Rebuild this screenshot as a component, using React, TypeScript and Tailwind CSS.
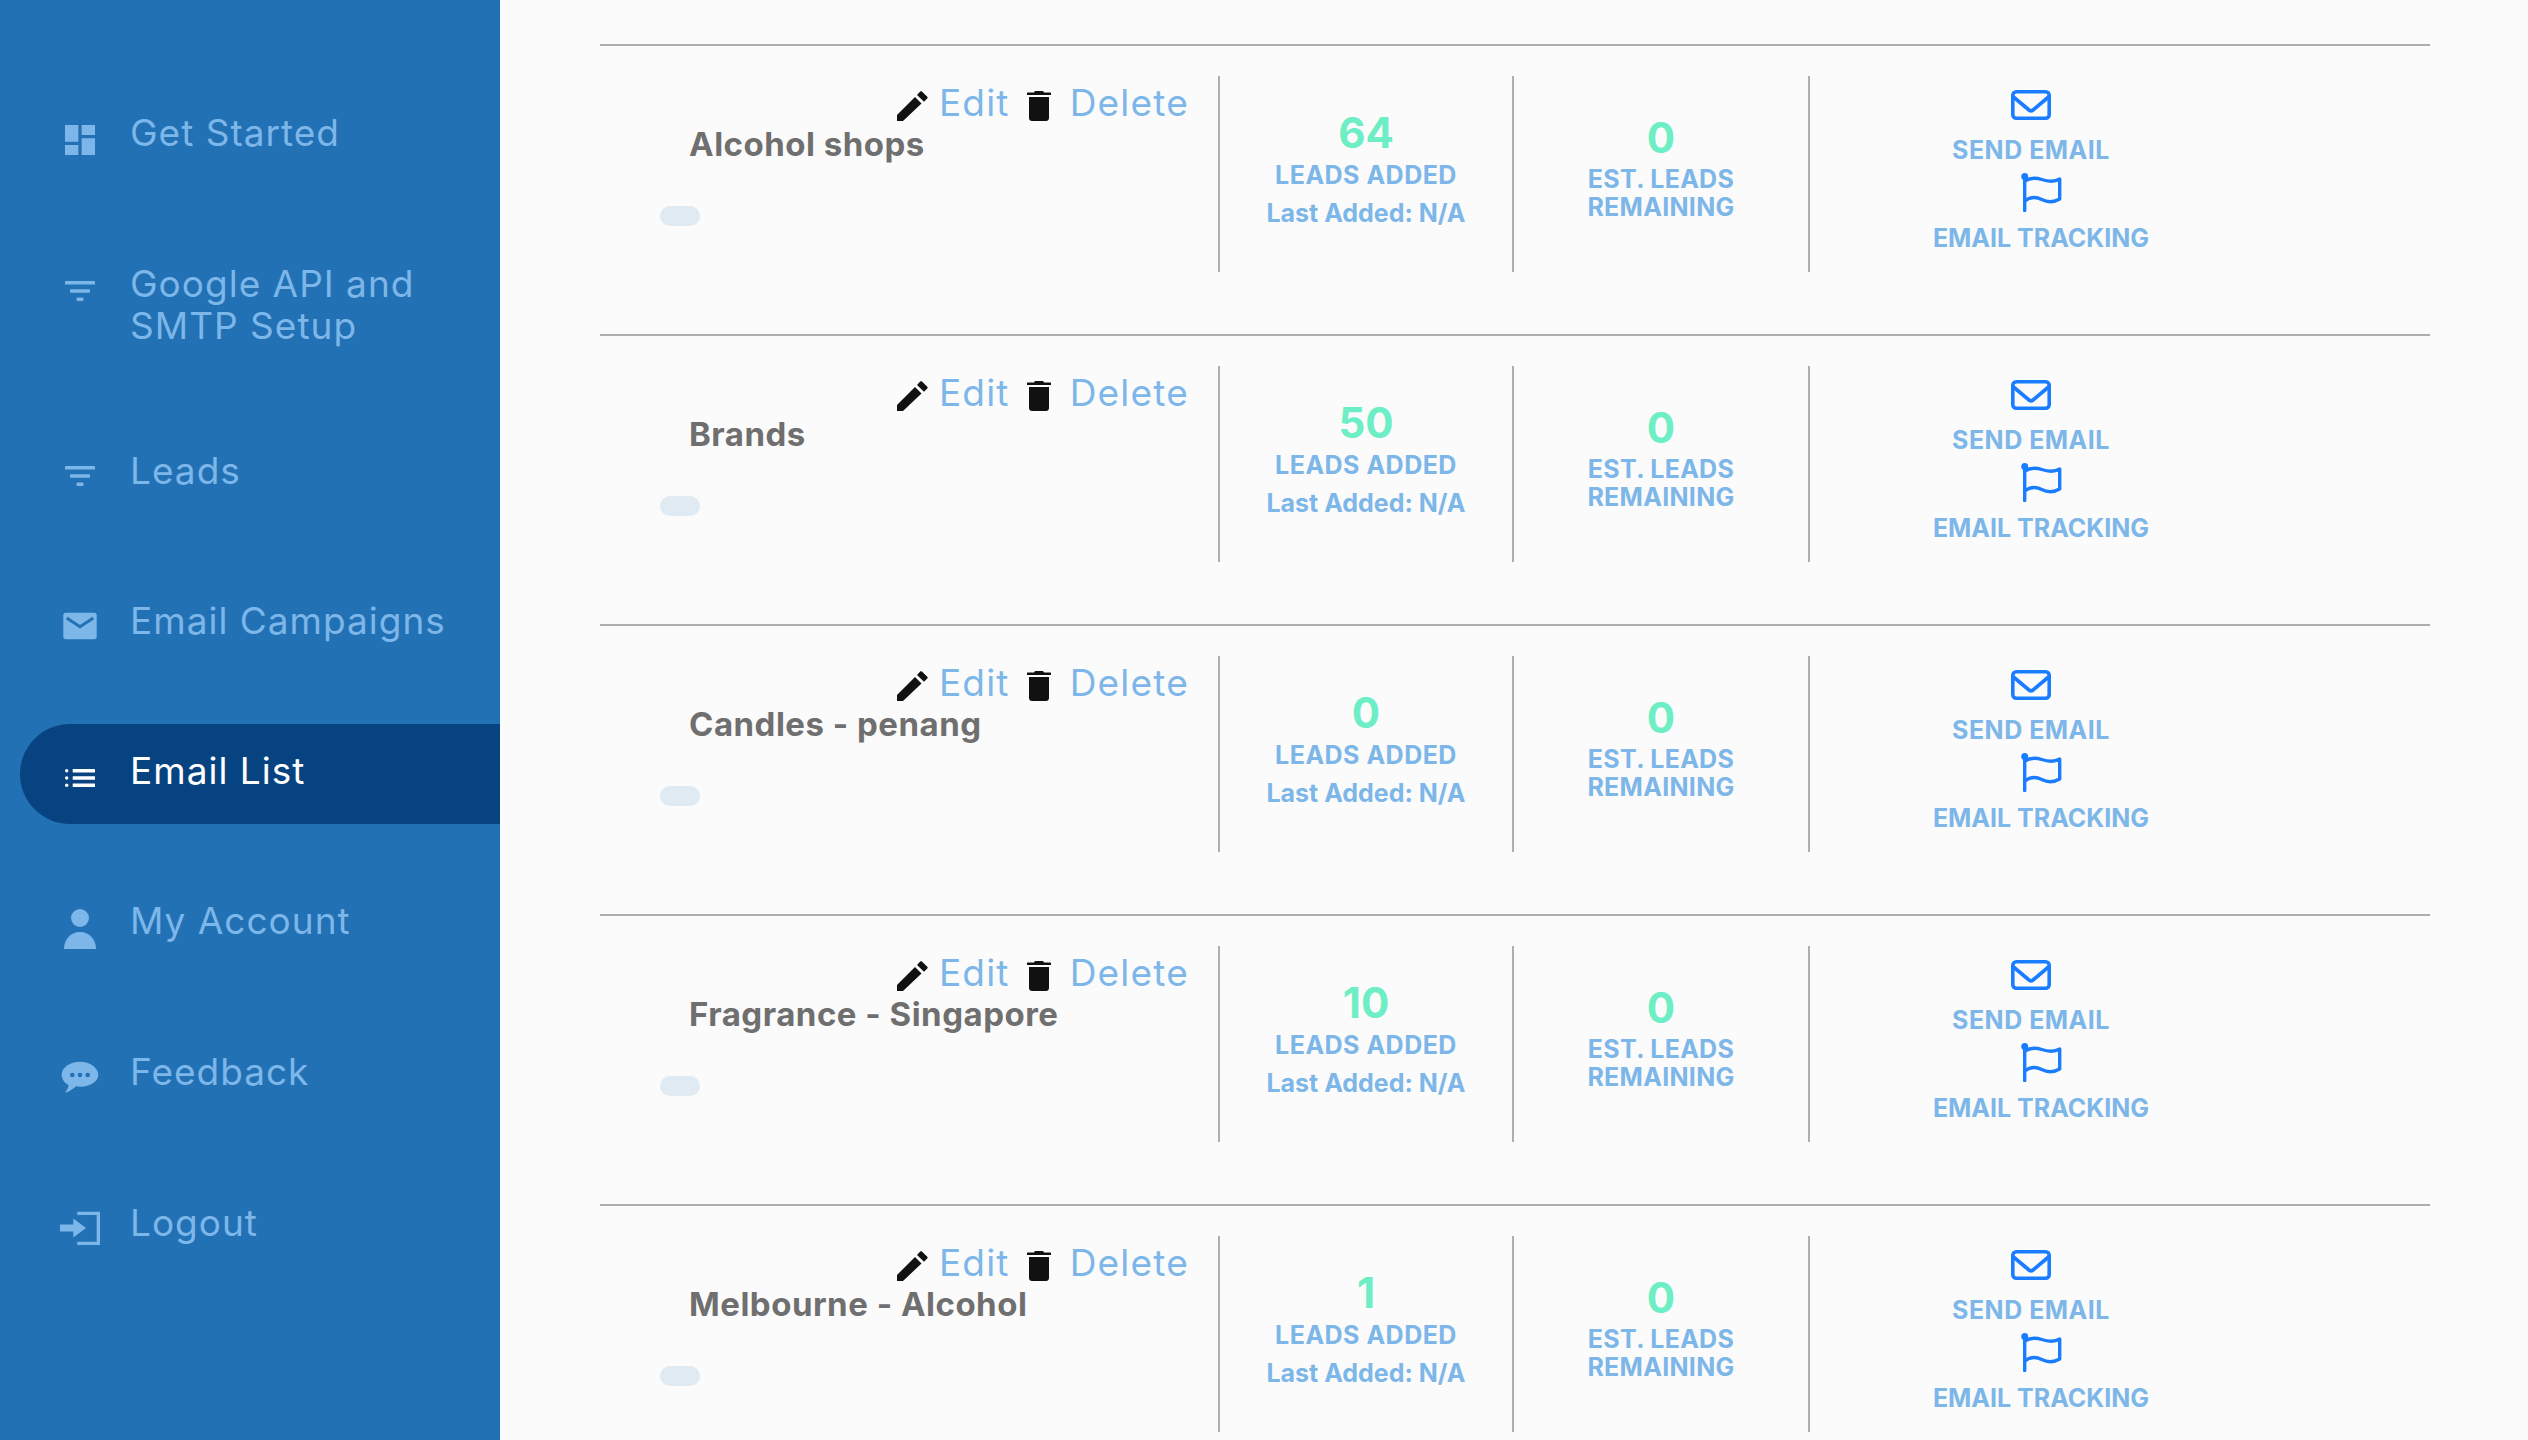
import React from "react";

const Dashboard = () => (
  <svg viewBox="0 0 24 24" className="w-10 h-10" fill="currentColor">
    <path d="M3 13h8V3H3v10zm0 8h8v-6H3v6zm10 0h8V11h-8v10zm0-18v6h8V3h-8z" />
  </svg>
);

const Filter = () => (
  <svg viewBox="0 0 40 40" className="w-10 h-10" fill="currentColor">
    <rect x="5" y="10" width="30" height="3.400" rx="0.500" />
    <rect x="10" y="18.300" width="20" height="3.400" rx="0.500" />
    <rect x="16.500" y="26.500" width="7" height="3.400" rx="1" />
  </svg>
);

const Mail = () => (
  <svg viewBox="0 0 40 40" className="w-10 h-10">
    <rect x="3.300" y="6.700" width="33.400" height="26.600" rx="2.500" fill="currentColor" />
    <path d="M6.700 12l13.300 8.700L33.300 12" fill="none" stroke="#2271b5" strokeWidth="3" />
  </svg>
);

const ListIcon = () => (
  <svg viewBox="0 0 40 40" className="w-10 h-10" fill="currentColor">
    <circle cx="6.700" cy="12.700" r="1.700" />
    <circle cx="6.700" cy="20" r="1.700" />
    <circle cx="6.700" cy="27.300" r="1.700" />
    <rect x="12.700" y="11" width="22.300" height="3.400" rx="0.500" />
    <rect x="12.700" y="18.300" width="22.300" height="3.400" rx="0.500" />
    <rect x="12.700" y="25.600" width="22.300" height="3.400" rx="0.500" />
  </svg>
);

const Person = () => (
  <svg viewBox="0 0 40 40" className="w-10 h-10" fill="currentColor">
    <circle cx="20" cy="9" r="9" />
    <path d="M4 40c0-10 7-17 16-17s16 7 16 17H4z" />
  </svg>
);

const Chat = () => (
  <svg viewBox="0 0 40 40" className="w-10 h-10" fill="currentColor">
    <path
      fillRule="evenodd"
      d="M20 4.700c-10.100 0-18.300 5.600-18.300 13 0 4.400 2.700 8.100 7 10.300-.6 2.900-2.100 5.700-3.700 7.700 4.100-.8 8.500-4 11-6.400 1.300.2 2.700.4 4 .4 10.100 0 18.300-5.400 18.300-12s-8.200-13-18.300-13zM12.300 20.300a2.300 2.300 0 1 1 0-4.600 2.300 2.300 0 0 1 0 4.600zm7.700 0a2.300 2.300 0 1 1 0-4.600 2.300 2.300 0 0 1 0 4.600zm7.700 0a2.300 2.300 0 1 1 0-4.600 2.300 2.300 0 0 1 0 4.600z"
    />
  </svg>
);

const Exit = () => (
  <svg viewBox="0 0 40 40" className="w-10 h-10" fill="currentColor">
    <path d="M17.300 3.700H40V37H17.300v-3.300h19.400V7H17.300z" />
    <path d="M0 16.500h13.300v-6L26 20 13.300 29.500v-6H0z" />
  </svg>
);

const Pencil = () => (
  <svg viewBox="0 0 31 30" className="w-[31px] h-[30px]" fill="#111111">
    <path d="M0 30v-6L18 6l6.500 6.500L6 30H0z" />
    <path d="M20 4l3.200-3.400c.5-.5 1.200-.5 1.700 0l5.400 5.200c.5.500.5 1.200 0 1.700L27 10.800 20 4z" />
  </svg>
);

const Trash = () => (
  <svg viewBox="0 0 24 30" className="w-[24px] h-[30px]" fill="#111111">
    <path d="M8 0h8l1 1.500h6.500c.3 0 .5.200.5.500V4H0V2c0-.3.200-.5.500-.5H7L8 0z" />
    <path d="M2 6h20v21c0 1.700-1.300 3-3 3H5c-1.700 0-3-1.300-3-3V6z" />
  </svg>
);

const Envelope = () => (
  <svg viewBox="0 0 40 30" className="w-10 h-[30px]" fill="none" stroke="#1a7dff" strokeWidth="3.600" strokeLinejoin="round" strokeLinecap="round">
    <rect x="1.800" y="1.800" width="36.400" height="26.400" rx="3.500" />
    <path d="M2.500 7l15.500 13c1.200 1 2.800 1 4 0L37.500 7" />
  </svg>
);

const Flag = () => (
  <svg viewBox="0 0 41 40" className="w-[41px] h-10" fill="none" stroke="#1a7dff" strokeWidth="3.400" strokeLinecap="round" strokeLinejoin="round">
    <path d="M3.700 5v33.500" />
    <circle cx="3.700" cy="4.500" r="2.500" fill="#1a7dff" strokeWidth="2" />
    <path d="M3.700 9c6-3.500 11-3.500 17-1.500s12 3 18-.5v20c-6 3.500-12 3.500-18 .5s-11-3-17 1.500" />
  </svg>
);

// ic / tx nudge the icon and label, they don't sit on the same line in the design
const menu = [
  { label: "Get Started", icon: <Dashboard />, ic: "mt-[10px]", tx: "-mt-[4px]" },
  { label: "Google API and SMTP Setup", icon: <Filter />, tall: true, ic: "-mt-[27px]", tx: "mt-0" },
  { label: "Leads", icon: <Filter />, ic: "mt-[4px]", tx: "-mt-[6px]" },
  { label: "Email Campaigns", icon: <Mail />, ic: "mt-[4px]", tx: "-mt-[6px]" },
  { label: "Email List", icon: <ListIcon />, active: true, ic: "mt-[8px]", tx: "-mt-[6px]" },
  { label: "My Account", icon: <Person />, ic: "mt-[10px]", tx: "-mt-[6px]" },
  { label: "Feedback", icon: <Chat />, ic: "mt-[6px]", tx: "-mt-[4px]" },
  { label: "Logout", icon: <Exit />, ic: "mt-[8px]", tx: "-mt-[2px]" },
];

const lists = [
  { name: "Alcohol shops", leads: "64" },
  { name: "Brands", leads: "50" },
  { name: "Candles - penang", leads: "0" },
  { name: "Fragrance - Singapore", leads: "10" },
  { name: "Melbourne - Alcohol", leads: "1" },
];

const Sidebar = () => (
  <div className="w-[500px] h-full shrink-0 bg-[#2271b5] pt-[85px] pl-5 flex flex-col gap-[50px]">
    {menu.map((m) => (
      <div
        key={m.label}
        className={`flex items-center pl-[40px] pr-8 rounded-l-[50px] ${m.tall ? "h-[139px]" : "h-[100px]"} ${m.active ? "bg-[#084381] text-white" : "text-[#7db6e8]"}`}
      >
        <div className={`w-10 shrink-0 ${m.ic}`}>{m.icon}</div>
        <div className={`ml-[30px] text-[37px] leading-[42px] tracking-[1px] ${m.tx}`}>{m.label}</div>
      </div>
    ))}
  </div>
);

const Row = ({ name, leads }: { name: string; leads: string }) => (
  <div className="h-[290px] border-t-2 border-[#aeaeae] pt-[30px] flex items-start shrink-0">
    <div className="w-[618px] h-[196px] relative shrink-0 pl-[89px] pt-[47px]">
      <div className="absolute right-[29px] top-[6px] flex items-center text-[#7db6e8] text-[37px] leading-[42px] tracking-[1.2px]">
        <span className="mt-[6px]"><Pencil /></span>
        <span className="ml-[11px]">Edit</span>
        <span className="ml-[17px] mt-[6px]"><Trash /></span>
        <span className="ml-[19px]">Delete</span>
      </div>
      <div className="text-[33px] leading-[42px] font-bold tracking-[0.5px] text-[#6f6f6f]">{name}</div>
      <div className="absolute left-[60px] top-[130px] w-10 h-5 rounded-full bg-[#dfeaf3]"></div>
    </div>
    <div className="w-[294px] h-[196px] border-l-2 border-[#aeaeae] shrink-0 flex flex-col items-center pt-[32px] font-bold text-[#7db6e8]">
      <div className="text-[42px] leading-[50px] text-[#6eeec5]">{leads}</div>
      <div className="text-[25px] leading-[28px] tracking-[0.5px] mt-[3px]">LEADS ADDED</div>
      <div className="text-[25px] leading-[28px] mt-[10px]">Last Added: N/A</div>
    </div>
    <div className="w-[296px] h-[196px] border-l-2 border-[#aeaeae] shrink-0 flex flex-col items-center pt-[37px] font-bold text-[#7db6e8]">
      <div className="text-[42px] leading-[50px] text-[#6eeec5]">0</div>
      <div className="text-[25px] leading-[28px] tracking-[0.3px] mt-[2px] text-center">EST. LEADS<br />REMAINING</div>
    </div>
    <div className="flex-1 h-[196px] border-l-2 border-[#aeaeae] font-bold text-[#7db6e8] text-[25px] leading-[28px] pl-[111px] pt-[14px]">
      <div className="w-[240px] flex flex-col items-center -translate-x-[10px]">
        <Envelope />
        <div className="mt-[16px] tracking-[0.5px]">SEND EMAIL</div>
      </div>
      <div className="w-[240px] flex flex-col items-center mt-[8px]">
        <Flag />
        <div className="mt-[12px]">EMAIL TRACKING</div>
      </div>
    </div>
  </div>
);

export default function App() {
  return (
    <div className="w-[2528px] h-[1440px] flex overflow-hidden bg-[#fbfbfb] font-['Inter',sans-serif]">
      <Sidebar />
      <div className="w-[1830px] ml-[100px] pt-[44px] flex flex-col">
        {lists.map((l) => (
          <Row key={l.name} name={l.name} leads={l.leads} />
        ))}
      </div>
    </div>
  );
}
